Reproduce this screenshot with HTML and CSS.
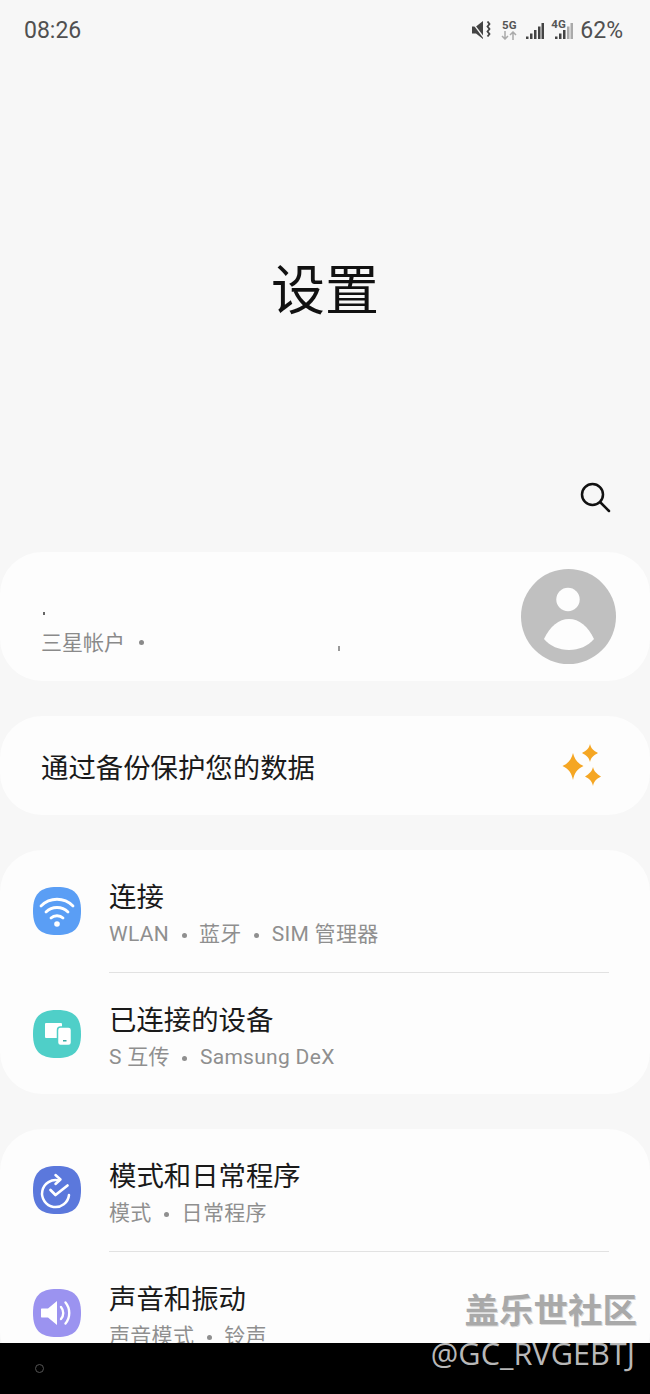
FILE: index.html
```html
<!DOCTYPE html>
<html lang="zh-CN">
<head>
    <meta charset="UTF-8">
    <meta name="viewport" content="width=device-width, initial-scale=1.0">
    <title>设置</title>
    <link rel="stylesheet" href="styles.css">
</head>
<body>

<div class="screen">
    <div class="content">
        <div class="status-bar">
            <span class="time">08:26</span>
            <div class="status-icons">
                <svg class="ic-mute" width="19" height="18" viewBox="0 0 19 18">
                    <path d="M0 5.500h4L11 0v18l-7-5.500H0z" fill="#444"/>
                    <path d="M0 1l12 16" stroke="#f7f7f7" stroke-width="1.300"/>
                    <path d="M15.500 0.500l2 2.500-2 2.500 2 2.500-2 2.500 2 2.500-2 2.500" fill="none" stroke="#444" stroke-width="1.800"/>
                </svg>
                <div class="net net-5g">
                    <span class="net-label">5G</span>
                    <svg width="16" height="9" viewBox="0 0 16 9">
                        <path d="M4 0v8M1 5l3 3 3-3" fill="none" stroke="#aaa" stroke-width="1.500"/>
                        <path d="M12 9V1M9 4l3-3 3 3" fill="none" stroke="#aaa" stroke-width="1.500"/>
                    </svg>
                </div>
                <svg class="ic-signal" width="18" height="16" viewBox="0 0 18 16">
                    <rect x="0" y="13.500" width="2.500" height="2.500" fill="#444"/>
                    <rect x="4" y="10.500" width="2.500" height="5.500" fill="#444"/>
                    <rect x="8" y="7" width="2.500" height="9" fill="#444"/>
                    <rect x="12" y="3.500" width="2.500" height="12.500" fill="#444"/>
                    <rect x="15.500" y="0" width="2.500" height="16" fill="#444"/>
                </svg>
                <div class="signal-4g">
                    <span class="net-label label-4g">4G</span>
                    <svg width="18" height="16" viewBox="0 0 18 16">
                        <rect x="0" y="13.500" width="2.500" height="2.500" fill="#444"/>
                        <rect x="4" y="10.500" width="2.500" height="5.500" fill="#444"/>
                        <rect x="8" y="7" width="2.500" height="9" fill="#444"/>
                        <rect x="12" y="3.500" width="2.500" height="12.500" fill="#aaa"/>
                        <rect x="15.500" y="0" width="2.500" height="16" fill="#aaa"/>
                    </svg>
                </div>
                <span class="battery">62%</span>
            </div>
        </div>

        <h1 class="page-title">设置</h1>

        <div class="search-row">
            <svg width="32" height="32" viewBox="0 0 32 32">
                <circle cx="12.500" cy="13.500" r="10.500" fill="none" stroke="#111" stroke-width="2.500"/>
                <path d="M20.500 21.500l8.500 8.500" stroke="#111" stroke-width="2.500" stroke-linecap="round"/>
            </svg>
        </div>

        <div class="card account-card">
            <div class="account-text">
                <div class="account-name"><i class="speck"></i></div>
                <div class="account-sub">
                    <span>三星帐户</span>
                    <span class="sep-dot"></span>
                    <i class="speck speck-sub"></i>
                </div>
            </div>
            <svg class="avatar" width="96" height="96" viewBox="0 0 96 96">
                <circle cx="47.500" cy="47.500" r="47.500" fill="#c0c0c0"/>
                <circle cx="47" cy="30.500" r="11.700" fill="#fdfdfd"/>
                <path d="M23 70C29 57 38 50 48 50s19 7 25 20c-6 7-15 11-25 11s-19-4-25-11z" fill="#fdfdfd"/>
            </svg>
        </div>

        <div class="card backup-card">
            <span class="backup-text">通过备份保护您的数据</span>
            <svg class="sparkles" width="40" height="42" viewBox="0 0 40 42">
                <path d="M11 9c1.500 6 4 10 10.500 13C15 25 12.500 29 11 36 9.500 29 7 25 .5 22 7 19 9.500 15 11 9z" fill="#f5a623"/>
                <path d="M28 0c1 4.500 3.500 6.500 8 9-4.500 2.500-7 4.500-8 9-1-4.500-3.500-6.500-8-9 4.500-2.500 7-4.500 8-9z" fill="#f5a623"/>
                <path d="M31 23c1 4.500 3.500 6.500 8 9.500-4.500 2.500-7 4.500-8 9.500-1-5-3.500-7-8-9.500 4.500-3 7-5 8-9.500z" fill="#f5a623"/>
            </svg>
        </div>

        <div class="card group-card">
            <div class="row">
                <svg class="row-icon" width="48" height="48" viewBox="0 0 48 48">
                    <path d="M24 0C41 0 48 7 48 24S41 48 24 48 0 41 0 24 7 0 24 0z" fill="#5a9ef5"/>
                    <path d="M8 19c9-9 23-9 32 0M13 25c6-6 16-6 22 0M18 31c3-3 9-3 12 0" fill="none" stroke="#fff" stroke-width="2.800" stroke-linecap="round"/>
                    <circle cx="24" cy="37" r="2.800" fill="#fff"/>
                </svg>
                <div class="row-text">
                    <div class="row-title">连接</div>
                    <div class="row-sub">WLAN <b></b> 蓝牙 <b></b> SIM 管理器</div>
                </div>
            </div>
            <div class="row row-divided">
                <svg class="row-icon" width="48" height="48" viewBox="0 0 48 48">
                    <path d="M24 0C41 0 48 7 48 24S41 48 24 48 0 41 0 24 7 0 24 0z" fill="#4fcfc8"/>
                    <rect x="12" y="13" width="17" height="15" rx="1" fill="#fff"/>
                    <rect x="24.500" y="17" width="14" height="18.500" rx="3" fill="#fff" stroke="#4fcfc8" stroke-width="1.500"/>
                    <rect x="26.500" y="19" width="10" height="14.500" rx="1.500" fill="#fff"/>
                    <rect x="30" y="30" width="3.500" height="1.500" fill="#3aa9a3"/>
                </svg>
                <div class="row-text">
                    <div class="row-title">已连接的设备</div>
                    <div class="row-sub">S 互传 <b></b> Samsung DeX</div>
                </div>
            </div>
        </div>

        <div class="card group-card">
            <div class="row">
                <svg class="row-icon" width="48" height="48" viewBox="0 0 48 48">
                    <path d="M24 0C41 0 48 7 48 24S41 48 24 48 0 41 0 24 7 0 24 0z" fill="#5b78dc"/>
                    <path d="M36 29A13.500 13.500 0 1 1 26 14.500" fill="none" stroke="#fff" stroke-width="2.500" stroke-linecap="round"/>
                    <path d="M22.500 9l5 4.500-5 4.500" fill="none" stroke="#fff" stroke-width="2.500" stroke-linecap="round" stroke-linejoin="round"/>
                    <path d="M17.500 24l5 5 12-9.500" fill="none" stroke="#fff" stroke-width="2.700" stroke-linecap="round" stroke-linejoin="round"/>
                </svg>
                <div class="row-text">
                    <div class="row-title">模式和日常程序</div>
                    <div class="row-sub">模式 <b></b> 日常程序</div>
                </div>
            </div>
            <div class="row row-divided">
                <svg class="row-icon" width="48" height="48" viewBox="0 0 48 48">
                    <path d="M24 0C41 0 48 7 48 24S41 48 24 48 0 41 0 24 7 0 24 0z" fill="#9b93f0"/>
                    <path d="M9 19.500h6L24 12v24l-9-7.500H9c-.8 0-1-.5-1-1v-7c0-.5.2-1 1-1z" fill="#fff"/>
                    <path d="M28 18c3 3.500 3 8.500 0 12M32.500 13.500c5 6 5 15 0 21" fill="none" stroke="#fff" stroke-width="2.400" stroke-linecap="round"/>
                </svg>
                <div class="row-text">
                    <div class="row-title">声音和振动</div>
                    <div class="row-sub">声音模式 <b></b> 铃声</div>
                </div>
            </div>
        </div>
    </div>

    <div class="nav-bar">
        <span class="nav-dot"></span>
    </div>

    <div class="watermark">
        <div class="wm-cn">盖乐世社区</div>
        <div class="wm-id">@GC_RVGEBTJ</div>
    </div>
</div>

</body>
</html>
```

FILE: styles.css
```css
* {
    box-sizing: border-box;
}
body {
    margin: 0;
    font-family: Roboto, "Noto Sans CJK SC", sans-serif;
    background-color: #f7f7f7;
}
.screen {
    position: relative;
    width: 650px;
    height: 1394px;
    display: flex;
    flex-direction: column;
    overflow: hidden;
}
.content {
    height: 1343px;
    flex: none;
    overflow: hidden;
}

/* status bar */
.status-bar {
    height: 60px;
    padding: 0 27px 0 24px;
    display: flex;
    justify-content: space-between;
    align-items: center;
    color: #505050;
}
.time {
    font-size: 23px;
}
.status-icons {
    display: flex;
    align-items: center;
}
.ic-mute {
    margin-right: 10px;
}
.net {
    width: 16px;
    display: flex;
    flex-direction: column;
    align-items: center;
    margin-right: 9px;
}
.net-label {
    font-size: 11.500px;
    line-height: 11px;
    font-weight: 700;
    color: #555;
}
.ic-signal {
    margin: 2px 7px 0 0;
}
.signal-4g {
    position: relative;
    width: 22px;
    height: 20px;
    margin-right: 7px;
}
.signal-4g svg {
    position: absolute;
    right: 0;
    top: 3px;
}
.label-4g {
    position: absolute;
    left: 0;
    top: -1px;
}
.battery {
    font-size: 23px;
}

/* header */
.page-title {
    margin: 0;
    padding-top: 197px;
    font-size: 54px;
    line-height: 70px;
    font-weight: 400;
    text-align: center;
    color: #111;
}
.search-row {
    height: 44px;
    margin-top: 148px;
    margin-bottom: 33px;
    padding-right: 38px;
    display: flex;
    justify-content: flex-end;
    align-items: center;
}

/* cards */
.card {
    background-color: #fdfdfd;
    border-radius: 42px;
    margin-bottom: 35px;
}
.account-card {
    height: 129px;
    padding: 0 33px 0 41px;
    display: flex;
    justify-content: space-between;
    align-items: center;
}
.account-text {
    flex: 1;
}
.account-name {
    height: 52px;
}
.account-sub {
    position: relative;
    display: flex;
    align-items: center;
    font-size: 21px;
    line-height: 30px;
    color: #8a8a8a;
}
.sep-dot {
    width: 5px;
    height: 5px;
    margin-left: 14px;
    border-radius: 50%;
    background-color: #8a8a8a;
}
.speck {
    display: block;
    width: 2px;
    height: 3px;
    margin-left: 2px;
    position: relative;
    top: 36px;
    background-color: #666;
}
.speck-sub {
    position: absolute;
    left: 297px;
    top: 18px;
    height: 5px;
    margin: 0;
    background-color: #999;
}
.backup-card {
    height: 99px;
    padding: 0 48px 0 41px;
    display: flex;
    justify-content: space-between;
    align-items: center;
}
.backup-text {
    font-size: 27.400px;
    color: #1a1a1a;
}
.sparkles {
    margin-bottom: 2px;
}
.group-card {
    padding: 0 41px 0 33px;
    margin-bottom: 35px;
}
.row {
    height: 122px;
    display: flex;
    align-items: center;
}
.row-divided {
    padding-top: 2px;
}
.row-icon {
    flex: none;
}
.row-text {
    flex: 1;
    align-self: stretch;
    margin-left: 28px;
    padding-top: 28px;
}
.row-divided .row-text {
    margin-top: -2px;
    border-top: 1px solid #e2e2e2;
    padding-top: 28px;
}
.row-title {
    font-size: 27.400px;
    line-height: 40px;
    color: #1a1a1a;
}
.row-sub {
    font-size: 21px;
    line-height: 32px;
    letter-spacing: 0.3px;
    color: #8f8f8f;
}
.row-sub b {
    display: inline-block;
    width: 5px;
    height: 5px;
    margin: 0 7px;
    border-radius: 50%;
    background-color: #8f8f8f;
    vertical-align: middle;
}

/* bottom bar */
.nav-bar {
    flex: 1;
    background-color: #000;
    padding: 21px 0 0 35px;
}
.nav-dot {
    display: block;
    width: 9px;
    height: 9px;
    border: 1px solid #555;
    border-radius: 50%;
}

/* forum watermark lies over the screenshot */
.watermark {
    position: absolute;
    right: 13px;
    top: 1289px;
    text-align: right;
}
.wm-cn {
    font-size: 34.500px;
    line-height: 44px;
    font-weight: 700;
    color: #a9a9a9;
    text-shadow: 1px 1px 0 #d8d8d8;
}
.wm-id {
    margin-right: 2px;
    font-family: "Open Sans", sans-serif;
    font-size: 30.700px;
    line-height: 40px;
    color: #b8b8b8;
}
```
